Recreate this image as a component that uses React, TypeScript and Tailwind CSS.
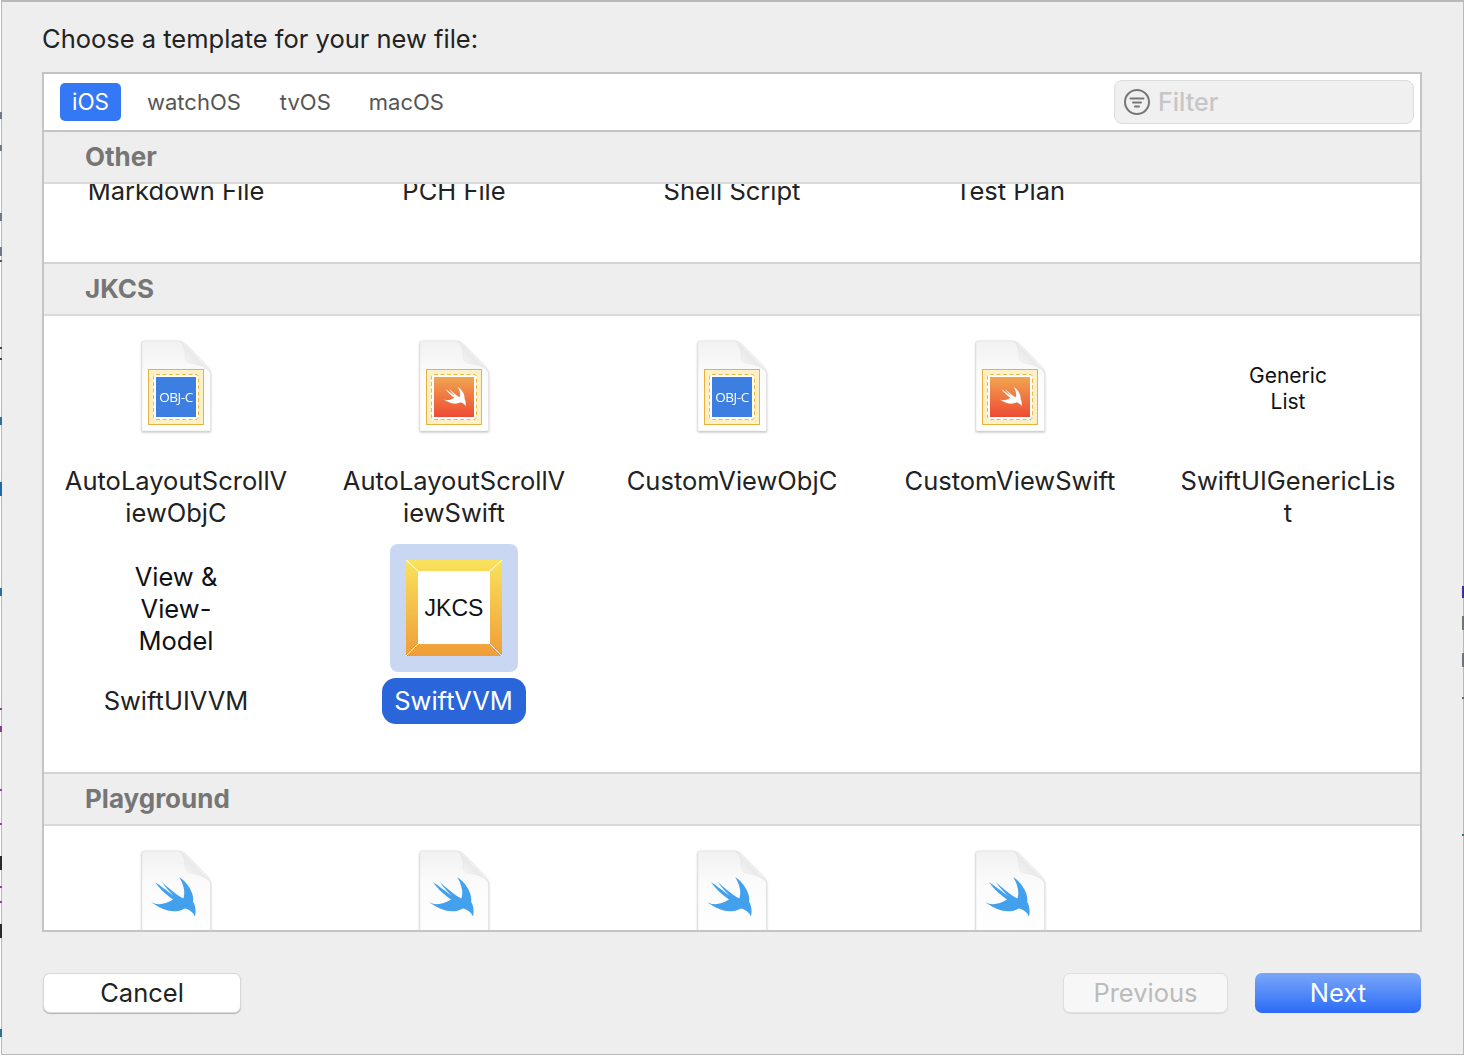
const BIRD =
  'M21 62.3C30 68 42 75.500 55 68.500C60 70 63 72 65 76.500C66.500 70 65 65 63.200 62C64.500 53 57 42 49.300 37.300C54 45 55.500 53 53.300 58.500C46.700 55 36.700 46.700 31.700 41.700C36 48 41 53 44 56C36.700 50.700 30 45 25 42.300C30 49.300 37 55.500 43 59.500C35 64.500 28 65.500 21 62.300Z';

// bits of the windows behind the sheet that show along its edges
const EDGE_MARKS = [
  { side: 'left', y: 112, h: 7, c: '#6f7a84' },
  { side: 'left', y: 145, h: 6, c: '#6f7a84' },
  { side: 'left', y: 213, h: 8, c: '#6f7a84' },
  { side: 'left', y: 247, h: 9, c: '#6f7a84' },
  { side: 'left', y: 260, h: 2, c: '#555555' },
  { side: 'left', y: 347, h: 2, c: '#444444' },
  { side: 'left', y: 358, h: 2, c: '#444444' },
  { side: 'left', y: 417, h: 8, c: '#2f6f9f' },
  { side: 'left', y: 482, h: 14, c: '#1f6aa5' },
  { side: 'left', y: 588, h: 8, c: '#2f6f9f' },
  { side: 'left', y: 708, h: 2, c: '#8c3a8c' },
  { side: 'left', y: 726, h: 6, c: '#8c3a8c' },
  { side: 'left', y: 789, h: 2, c: '#9c3a9c' },
  { side: 'left', y: 823, h: 2, c: '#9c3a9c' },
  { side: 'left', y: 856, h: 14, c: '#2a2a2a' },
  { side: 'left', y: 886, h: 2, c: '#9c3a9c' },
  { side: 'left', y: 901, h: 2, c: '#9c3a9c' },
  { side: 'left', y: 924, h: 14, c: '#2a2a2a' },
  { side: 'left', y: 1029, h: 8, c: '#2f6f9f' },
  { side: 'right', y: 586, h: 12, c: '#3a2fa0' },
  { side: 'right', y: 616, h: 14, c: '#6f7378' },
  { side: 'right', y: 653, h: 14, c: '#6f7378' },
  { side: 'right', y: 697, h: 2, c: '#666666' },
  { side: 'right', y: 834, h: 2, c: '#3f6f66' },
];

function FilePage({ children }: { children?: React.ReactNode }) {
  return (
    <svg width="72" height="94" viewBox="0 0 72 94" className="drop-shadow-[0_1px_1px_rgba(0,0,0,0.28)]">
      <defs>
        <linearGradient id="pageFill" x1="0" y1="0" x2="0" y2="1">
          <stop offset="0" stopColor="#f1f1f1" />
          <stop offset="0.35" stopColor="#fbfbfb" />
          <stop offset="1" stopColor="#ffffff" />
        </linearGradient>
        <linearGradient id="foldFill" x1="0" y1="1" x2="1" y2="0">
          <stop offset="0" stopColor="#ffffff" />
          <stop offset="1" stopColor="#d2d2d2" />
        </linearGradient>
        <linearGradient id="swiftFill" x1="0" y1="0" x2="0" y2="1">
          <stop offset="0" stopColor="#f1a550" />
          <stop offset="1" stopColor="#ee4a34" />
        </linearGradient>
      </defs>
      <path d="M2 4Q2 2 4 2H38Q42 2 45 5L66.500 27Q70.500 31 70.500 35V92H2Z" fill="url(#pageFill)" stroke="#e2e2e2" strokeWidth="0.6" />
      <path d="M40 2L70.500 33C64 26 55 25 50 24C46 23 45 20 45 16C45 10 43 5 40 2Z" fill="url(#foldFill)" stroke="#dddddd" strokeWidth="0.4" />
      {children}
    </svg>
  );
}

function Stamp({ children }: { children: React.ReactNode }) {
  return (
    <>
      <rect x="8.500" y="30.500" width="55" height="55" fill="#fdf0c6" stroke="#e9b23e" />
      <rect x="13.500" y="35.500" width="45" height="45" rx="2.500" fill="#fff" stroke="#efb93f" strokeDasharray="4 2.500" />
      {children}
    </>
  );
}

function ObjcIcon() {
  return (
    <FilePage>
      <Stamp>
        <rect x="16" y="38" width="40" height="40" fill="#3d7fe0" />
        <text x="36" y="62.500" textAnchor="middle" fontSize="13.500" fontWeight="500" fill="#fff" letterSpacing="-0.4" fontFamily="'Open Sans', sans-serif">
          OBJ-C
        </text>
      </Stamp>
    </FilePage>
  );
}

function SwiftIcon() {
  return (
    <FilePage>
      <Stamp>
        <rect x="16" y="38" width="40" height="40" fill="url(#swiftFill)" />
        <path d={BIRD} fill="#fff" transform="translate(15 29) scale(0.5)" />
      </Stamp>
    </FilePage>
  );
}

function PlaygroundIcon() {
  return (
    <FilePage>
      <path d={BIRD} fill="#42a0ec" transform="translate(-10 -9)" />
    </FilePage>
  );
}

function JkcsTile() {
  return (
    <svg width="96" height="96" viewBox="0 0 96 96">
      <defs>
        <linearGradient id="frameFill" x1="0" y1="0" x2="0" y2="1">
          <stop offset="0" stopColor="#f9e25c" />
          <stop offset="1" stopColor="#f09d38" />
        </linearGradient>
      </defs>
      <rect width="96" height="96" fill="url(#frameFill)" />
      <rect x="12" y="11" width="72" height="73" fill="#fff" />
      <path d="M0 0L12 11M96 0L84 11M0 96L12 84M96 96L84 84" stroke="#fff" strokeWidth="1" />
      <text x="48" y="56" textAnchor="middle" fontSize="23" fill="#111" fontFamily="'Liberation Sans', sans-serif">
        JKCS
      </text>
    </svg>
  );
}

function Label({ lines }: { lines: string[] }) {
  return (
    <div className="mt-[6px] px-3 py-[9px] text-center text-[25.5px] leading-[32px] text-[#222]">
      {lines.map((l) => (
        <div key={l}>{l}</div>
      ))}
    </div>
  );
}

function SectionHeader({ title, top = 'border-t-[#d4d4d4]' }: { title: string; top?: string }) {
  return (
    <div className={`h-[54px] shrink-0 flex items-center bg-[#eeeeee] border-t-2 border-b-2 border-b-[#dadada] pl-[41px] pb-[1px] text-[26px] font-bold text-[#767676] ${top}`}>
      {title}
    </div>
  );
}

const GRID = 'grid grid-cols-[repeat(5,264px)] gap-x-[14px]';

export default function App() {
  return (
    <div className="relative w-[1464px] h-[1056px] bg-white overflow-hidden font-['Inter',sans-serif]">
      <div className="w-[1463px] h-[1055px] ml-px bg-[#eeeeee] border-t-2 border-l border-r border-b border-[#b9b9b9] pl-[40px] pr-[41px]">
        <div className="h-[70px] pt-[5px] flex items-center text-[25.5px] text-[#222]">
          Choose a template for your new file:
        </div>

        <div className="h-[860px] border-2 border-[#c4c4c4] bg-white flex flex-col overflow-hidden">
          <div className="h-[56px] shrink-0 flex items-center pl-4 pr-[6px]">
            <div className="w-[61px] h-[38px] rounded-[5px] bg-[#3478f6] text-white text-[22.5px] flex items-center justify-center">iOS</div>
            <div className="ml-[26px] text-[22px] text-[#555]">watchOS</div>
            <div className="ml-[39px] text-[22px] text-[#555]">tvOS</div>
            <div className="ml-[38px] text-[22px] text-[#555]">macOS</div>
            <div className="ml-auto w-[300px] h-[44px] rounded-[8px] bg-[#f0f0f0] border border-[#dcdcdc] flex items-center pl-[9px] gap-[8px]">
              <svg width="26" height="26" viewBox="0 0 26 26" fill="none" stroke="#777" strokeLinecap="round">
                <circle cx="13" cy="13" r="12" strokeWidth="2" />
                <path d="M6.500 9.500H19.500M9 13.500H17M11 17.500H15" strokeWidth="2" />
              </svg>
              <span className="pt-[2px] text-[25px] font-medium text-[#c6c6c6]">Filter</span>
            </div>
          </div>

          <SectionHeader title="Other" top="border-t-[#c4c4c4]" />
          <div className="h-[78px] shrink-0 overflow-hidden">
            <div className={`${GRID} -mt-[9px] text-center text-[25.5px] leading-[32px] text-[#222]`}>
              <div>Markdown File</div>
              <div>PCH File</div>
              <div>Shell Script</div>
              <div>Test Plan</div>
            </div>
          </div>

          <SectionHeader title="JKCS" />
          <div className="h-[456px] shrink-0 pt-[6px]">
            <div className={`${GRID} grid-rows-[222px_auto]`}>
              <div className="flex flex-col items-center">
                <div className="h-[128px] flex items-center"><ObjcIcon /></div>
                <Label lines={['AutoLayoutScrollV', 'iewObjC']} />
              </div>
              <div className="flex flex-col items-center">
                <div className="h-[128px] flex items-center"><SwiftIcon /></div>
                <Label lines={['AutoLayoutScrollV', 'iewSwift']} />
              </div>
              <div className="flex flex-col items-center">
                <div className="h-[128px] flex items-center"><ObjcIcon /></div>
                <Label lines={['CustomViewObjC']} />
              </div>
              <div className="flex flex-col items-center">
                <div className="h-[128px] flex items-center"><SwiftIcon /></div>
                <Label lines={['CustomViewSwift']} />
              </div>
              <div className="flex flex-col items-center">
                <div className="h-[128px] pt-[6px] flex flex-col items-center justify-center text-center text-[21px] leading-[26px] text-[#111]">
                  <div>Generic</div>
                  <div>List</div>
                </div>
                <Label lines={['SwiftUIGenericLis', 't']} />
              </div>

              <div className="flex flex-col items-center">
                <div className="h-[128px] pt-[2px] flex flex-col items-center justify-center text-center text-[25.5px] leading-[32px] text-[#111]">
                  <div>View &amp;</div>
                  <div>View-</div>
                  <div>Model</div>
                </div>
                <div className="mt-[6px] px-3 py-[7px] text-[25.5px] leading-[32px] text-[#222]">SwiftUIVVM</div>
              </div>
              <div className="flex flex-col items-center">
                <div className="w-[128px] h-[128px] rounded-lg bg-[#c9d7f3] flex items-center justify-center"><JkcsTile /></div>
                <div className="mt-[6px] pl-3 pr-[13px] py-[7px] rounded-[14px] bg-[#2a66d9] text-[25.5px] leading-[32px] text-white">SwiftVVM</div>
              </div>
            </div>
          </div>

          <SectionHeader title="Playground" />
          <div className="flex-1 overflow-hidden pt-[6px]">
            <div className={GRID}>
              {[0, 1, 2, 3].map((i) => (
                <div key={i} className="h-[128px] flex items-center justify-center"><PlaygroundIcon /></div>
              ))}
            </div>
          </div>
        </div>

        <div className="mt-[41px] flex pl-px pr-px text-[25.5px]">
          <div className="w-[198px] h-[40px] rounded-[7px] bg-white border border-[#d8d8d8] shadow-[0_1px_1px_rgba(0,0,0,0.25)] flex items-center justify-center text-[#222]">Cancel</div>
          <div className="ml-auto w-[165px] h-[40px] rounded-[7px] bg-[#f7f7f7] border border-[#dedede] shadow-[0_1px_1px_rgba(0,0,0,0.08)] flex items-center justify-center text-[#bbbbbb]">Previous</div>
          <div className="ml-[27px] w-[166px] h-[40px] rounded-[7px] bg-gradient-to-b from-[#7aa6f8] to-[#2a6af6] flex items-center justify-center text-white">Next</div>
        </div>
      </div>

      {EDGE_MARKS.map((m) => (
        <div
          key={m.side + m.y}
          className="absolute w-[2px]"
          style={{ top: m.y, height: m.h, background: m.c, [m.side]: 0 }}
        />
      ))}
    </div>
  );
}
